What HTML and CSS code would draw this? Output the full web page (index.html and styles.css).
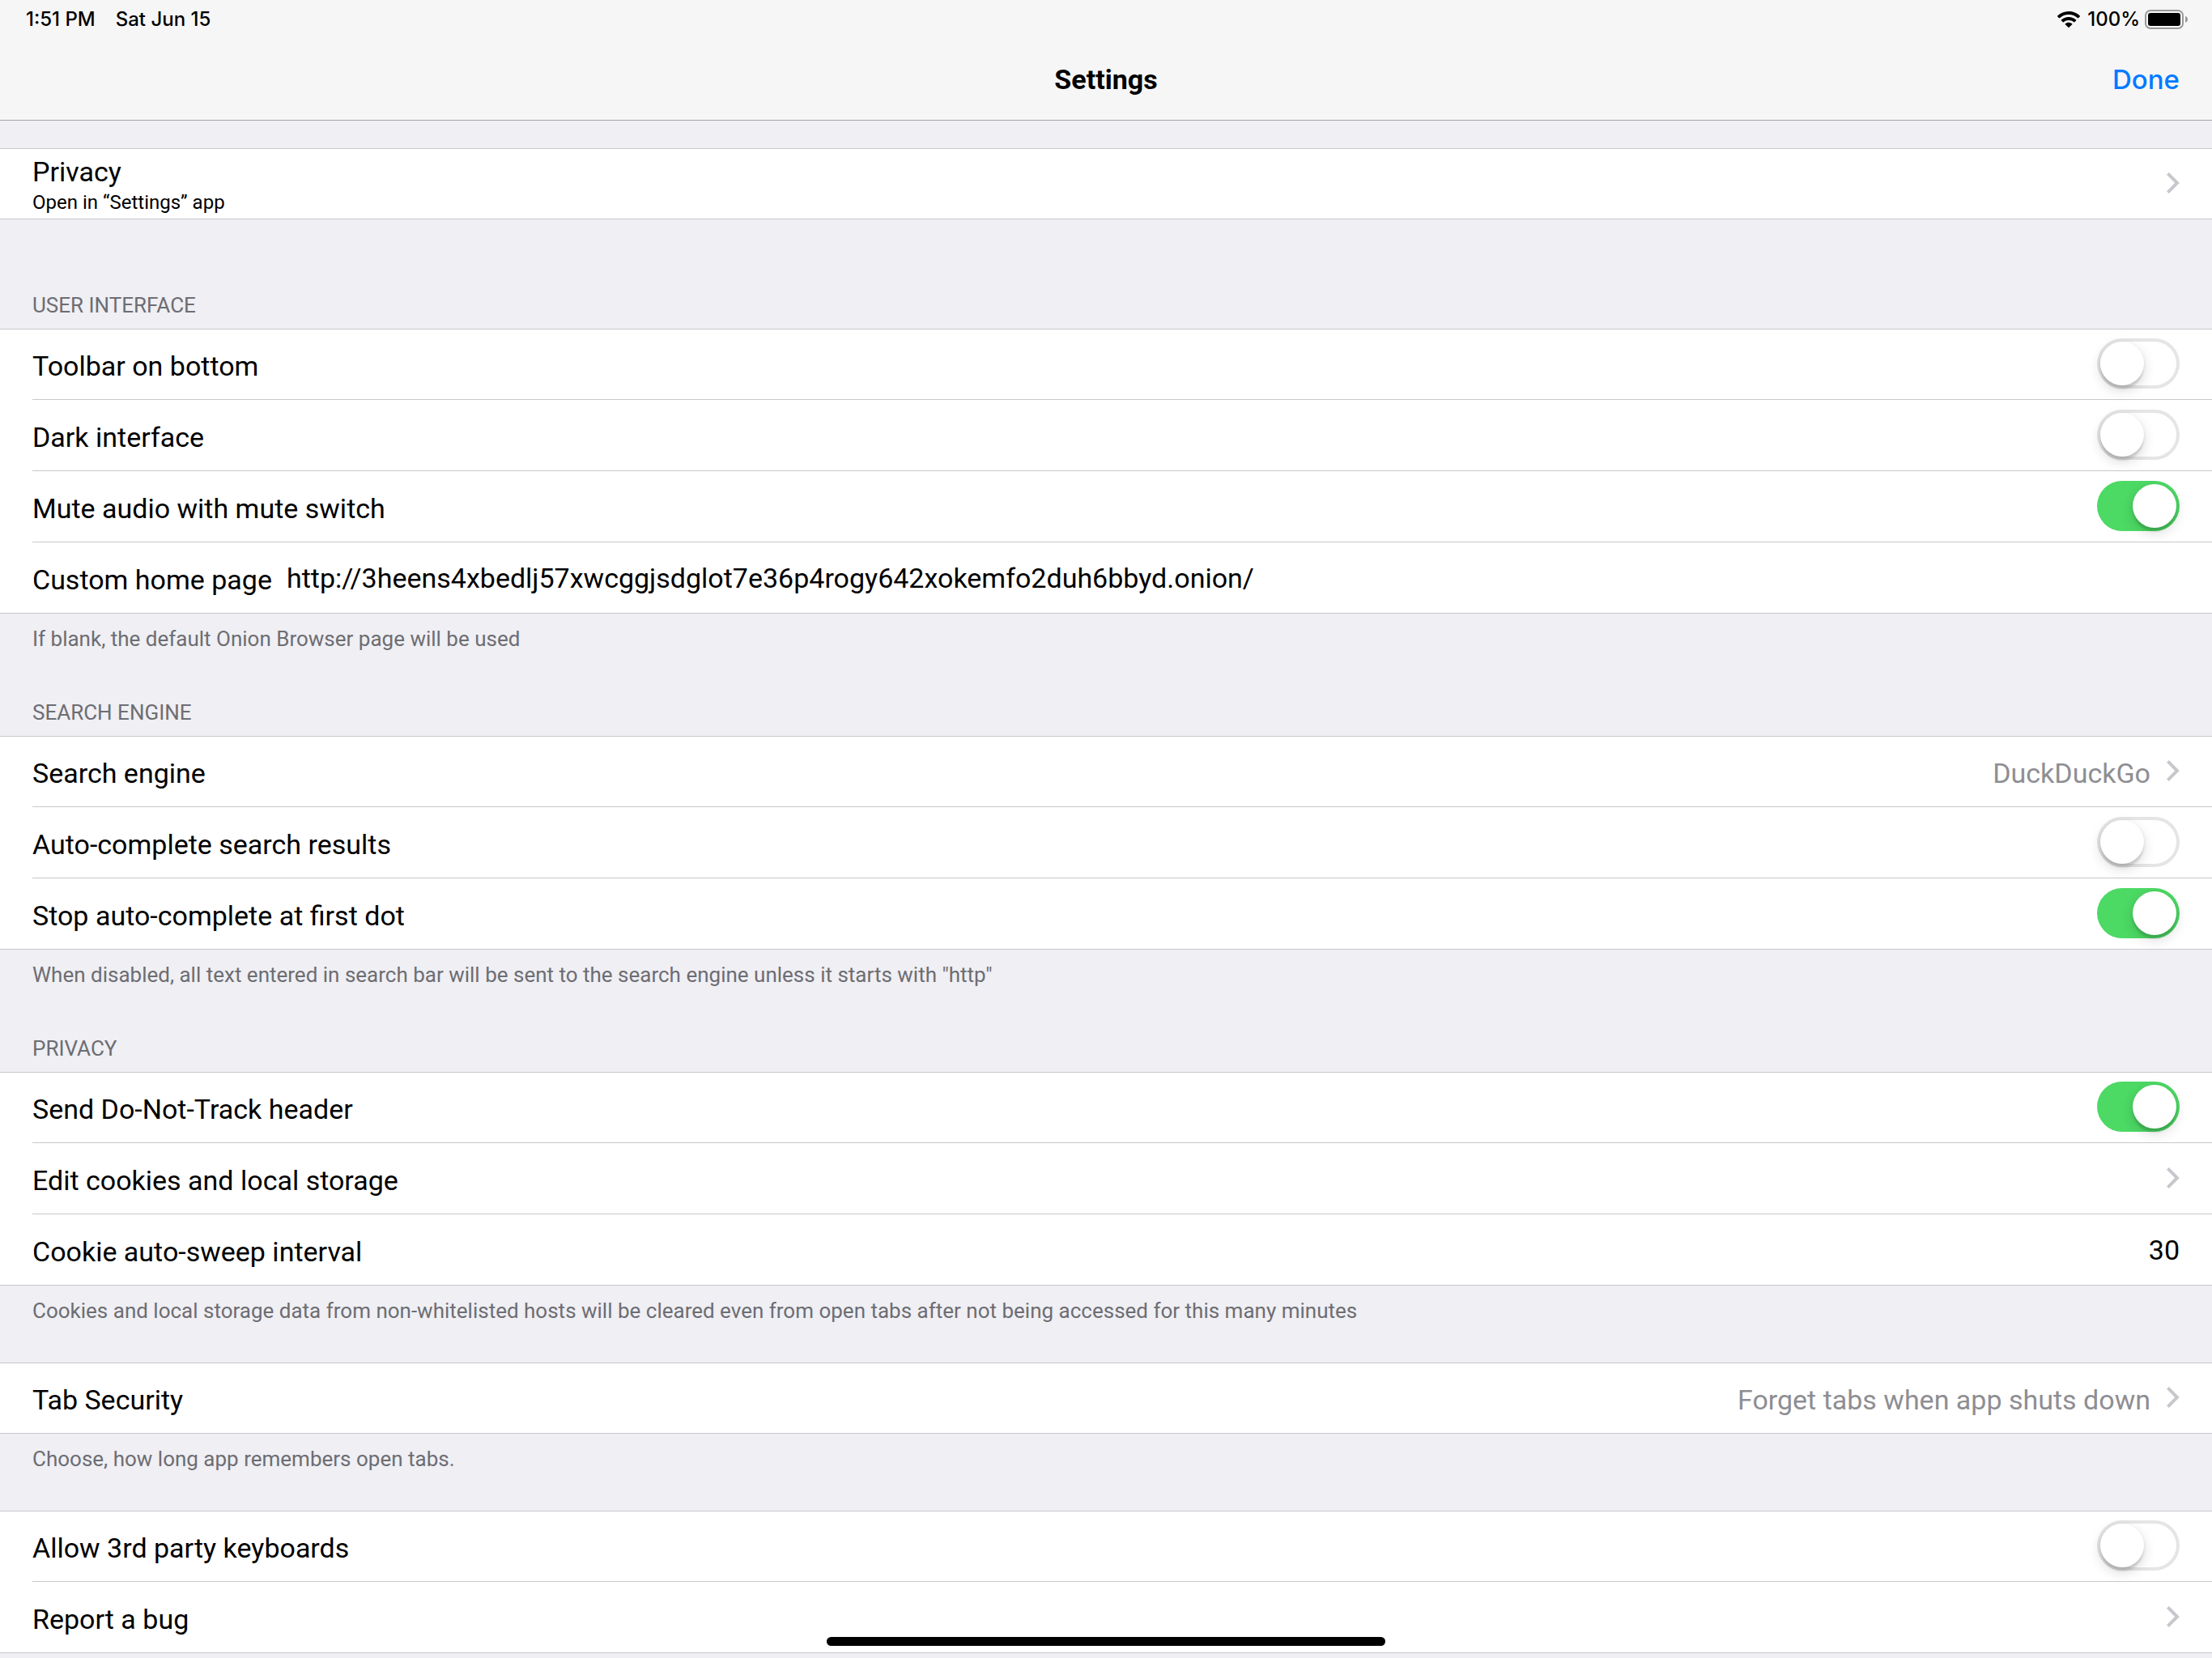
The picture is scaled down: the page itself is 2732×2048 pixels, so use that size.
FILE: index.html
```html
<!DOCTYPE html>
<html lang="en">
<head>
<meta charset="utf-8">
<meta name="viewport" content="width=device-width, initial-scale=1">
<title>Settings</title>
<link rel="stylesheet" href="styles.css">
</head>
<body>
<svg class="symbols" aria-hidden="true">
  <symbol id="chevron" viewBox="0 0 16 26"><path d="M1.4 1.4 13 13 1.4 24.6" fill="none" stroke="currentColor" stroke-width="4"/></symbol>
</svg>

<header class="top">
  <div class="status">
    <span class="status-side"><span>1:51 PM</span><span>Sat Jun 15</span></span>
    <span class="status-power">
      <svg class="wifi" viewBox="0 0 28 20" aria-hidden="true">
        <path d="M14 0C8.600 0 3.700 2.100.2 5.500a.6.6 0 0 0 0 .9l1.900 1.900a.6.6 0 0 0 .9 0A15.800 15.800 0 0 1 14 4a15.800 15.800 0 0 1 11 4.300.6.6 0 0 0 .9 0l1.900-1.900a.6.6 0 0 0 0-.9A19.900 19.900 0 0 0 14 0Z"/>
        <path d="M14 7c-3.500 0-6.700 1.300-9.100 3.500a.6.6 0 0 0 0 .9l1.900 1.900a.6.6 0 0 0 .9 0A9.300 9.300 0 0 1 14 11c2.400 0 4.600.9 6.300 2.300a.6.6 0 0 0 .9 0l1.900-1.900a.6.6 0 0 0 0-.9A13.400 13.400 0 0 0 14 7Z"/>
        <path d="M14 13.800c-1.600 0-3.100.6-4.200 1.500a.6.6 0 0 0 0 .9l3.700 3.600a.7.7 0 0 0 1 0l3.700-3.600a.6.6 0 0 0 0-.9 6.600 6.600 0 0 0-4.200-1.500Z"/>
      </svg>
      <span>100%</span>
      <svg class="battery" viewBox="0 0 54 24" aria-hidden="true">
        <rect x="1" y="1" width="46" height="22" rx="6" fill="none" stroke="#999" stroke-width="2"/>
        <rect x="4" y="4" width="40" height="16" rx="3"/>
        <path d="M50 8c2 .6 3 2.200 3 4s-1 3.400-3 4Z" fill="#999"/>
      </svg>
    </span>
  </div>
  <nav class="navbar">
    <h1 class="title">Settings</h1>
    <button class="done" type="button">Done</button>
  </nav>
</header>

<main>
  <section class="group group-first">
    <ul class="rows">
      <li class="row"><a class="cell" href="#privacy">
        <span class="stack"><span class="stack-title">Privacy</span><span class="stack-detail">Open in “Settings” app</span></span>
        <svg class="chevron" aria-hidden="true"><use href="#chevron"/></svg></a></li>
    </ul>
  </section>

  <section class="group">
    <h2 class="heading">USER INTERFACE</h2>
    <ul class="rows">
      <li class="row"><label class="cell"><span class="text">Toolbar on bottom</span><input class="switch" type="checkbox" role="switch"></label></li>
      <li class="row"><label class="cell"><span class="text">Dark interface</span><input class="switch" type="checkbox" role="switch"></label></li>
      <li class="row"><label class="cell"><span class="text">Mute audio with mute switch</span><input class="switch" type="checkbox" role="switch" checked></label></li>
      <li class="row"><label class="cell"><span class="text text-fixed">Custom home page</span><input class="field" type="text" value="http://3heens4xbedlj57xwcggjsdglot7e36p4rogy642xokemfo2duh6bbyd.onion/"></label></li>
    </ul>
    <p class="note">If blank, the default Onion Browser page will be used</p>
  </section>

  <section class="group">
    <h2 class="heading">SEARCH ENGINE</h2>
    <ul class="rows">
      <li class="row"><a class="cell" href="#search-engine"><span class="text">Search engine</span><span class="value">DuckDuckGo</span><svg class="chevron" aria-hidden="true"><use href="#chevron"/></svg></a></li>
      <li class="row"><label class="cell"><span class="text">Auto-complete search results</span><input class="switch" type="checkbox" role="switch"></label></li>
      <li class="row"><label class="cell"><span class="text">Stop auto-complete at first dot</span><input class="switch" type="checkbox" role="switch" checked></label></li>
    </ul>
    <p class="note">When disabled, all text entered in search bar will be sent to the search engine unless it starts with "http"</p>
  </section>

  <section class="group">
    <h2 class="heading">PRIVACY</h2>
    <ul class="rows">
      <li class="row"><label class="cell"><span class="text">Send Do-Not-Track header</span><input class="switch" type="checkbox" role="switch" checked></label></li>
      <li class="row"><a class="cell" href="#cookies"><span class="text">Edit cookies and local storage</span><svg class="chevron" aria-hidden="true"><use href="#chevron"/></svg></a></li>
      <li class="row"><label class="cell"><span class="text text-fixed">Cookie auto-sweep interval</span><input class="field field-end" type="text" inputmode="numeric" value="30"></label></li>
    </ul>
    <p class="note">Cookies and local storage data from non-whitelisted hosts will be cleared even from open tabs after not being accessed for this many minutes</p>
  </section>

  <section class="group">
    <ul class="rows">
      <li class="row"><a class="cell" href="#tab-security"><span class="text">Tab Security</span><span class="value">Forget tabs when app shuts down</span><svg class="chevron" aria-hidden="true"><use href="#chevron"/></svg></a></li>
    </ul>
    <p class="note">Choose, how long app remembers open tabs.</p>
  </section>

  <section class="group">
    <ul class="rows">
      <li class="row"><label class="cell"><span class="text">Allow 3rd party keyboards</span><input class="switch" type="checkbox" role="switch"></label></li>
      <li class="row"><a class="cell" href="#report"><span class="text">Report a bug</span><svg class="chevron" aria-hidden="true"><use href="#chevron"/></svg></a></li>
    </ul>
  </section>
</main>
<div class="home-indicator"></div>
</body>
</html>
```
FILE: styles.css
```css
:root {
  --line: #c8c7cc;
  --edge: 40px;
}

* {
  box-sizing: border-box;
}

body {
  margin: 0;
  min-height: 100vh;
  background: #efeff4;
  color: #000;
  font-family: Roboto, "Liberation Sans", sans-serif;
  font-size: 34px;
  line-height: 40px;
}

h1, h2, p, ul {
  margin: 0;
  padding: 0;
}

.symbols {
  display: none;
}

/* Status bar and navigation bar */
.top {
  background: #f6f6f7;
  border-bottom: 1px solid #a7a7aa;
}

.status {
  display: flex;
  justify-content: space-between;
  align-items: center;
  height: 48px;
  padding: 0 29px 0 32px;
  font-family: Inter, "Liberation Sans", sans-serif;
  font-size: 24px;
  font-weight: 500;
  line-height: 28px;
}

.status-side {
  display: flex;
  gap: 25px;
}

.status-power {
  display: flex;
  align-items: center;
  gap: 6px;
}

.wifi {
  width: 28px;
  height: 20px;
  margin-right: 3px;
}

.battery {
  width: 54px;
  height: 24px;
}

.navbar {
  display: grid;
  grid-template-columns: 1fr auto 1fr;
  align-items: center;
  height: 100px;
  padding: 0 var(--edge);
}

.title {
  grid-column: 2;
  font-size: 34px;
  font-weight: 700;
  line-height: 40px;
}

.done {
  justify-self: end;
  padding: 0;
  border: 0;
  background: none;
  color: #007aff;
  font: 500 33px/40px Inter, "Liberation Sans", sans-serif;
}

/* Grouped lists */
.group-first {
  padding: 34px 0 79px;
}

.heading {
  padding: 11px var(--edge) 13px;
  color: #6d6d72;
  font-size: 26px;
  font-weight: 400;
  line-height: 32px;
}

.note {
  padding: 15px var(--edge) 48px;
  color: #6d6d72;
  font-size: 26px;
  line-height: 32px;
}

.rows {
  list-style: none;
  background: #fff;
  border-bottom: 1px solid var(--line);
  box-shadow: inset 0 1px 0 var(--line);
}

.row {
  padding-left: var(--edge);
}

.cell {
  display: flex;
  align-items: center;
  height: 88px;
  padding: 0 var(--edge) 2px 0;
  border-bottom: 1px solid var(--line);
  color: inherit;
  text-decoration: none;
}

.row:last-child .cell {
  height: 87px;
  border-bottom: 0;
}

.text {
  flex: 1;
  padding-top: 6px;
}

.text-fixed {
  flex: none;
}

.value {
  padding-top: 6px;
  margin-right: 20px;
  color: #8e8e93;
}

.stack {
  flex: 1;
  display: flex;
  flex-direction: column;
  padding-top: 9px;
}

.stack-detail {
  font-size: 24px;
  line-height: 36px;
}

.chevron {
  width: 16px;
  height: 26px;
  color: #c7c7cc;
}

.field {
  flex: 1;
  min-width: 0;
  margin-left: 18px;
  padding: 3px 0 0;
  border: 0;
  background: none;
  color: inherit;
  font: inherit;
}

.field-end {
  text-align: right;
}

.switch {
  appearance: none;
  display: flex;
  width: 102px;
  height: 62px;
  margin: 0;
  padding: 4px;
  border-radius: 31px;
  background: #fff;
  box-shadow: inset 0 0 0 4px #e5e5e5;
}

.switch::before {
  content: "";
  width: 54px;
  height: 54px;
  border-radius: 50%;
  background: #fff;
  box-shadow: 0 6px 16px rgba(0, 0, 0, 0.15), 0 6px 2px -1px rgba(0, 0, 0, 0.08), 0 2px 4px rgba(0, 0, 0, 0.1);
}

.switch:checked {
  justify-content: flex-end;
  background: #4cd964;
  box-shadow: none;
}

.home-indicator {
  position: fixed;
  bottom: 15px;
  left: 50%;
  width: 690px;
  height: 11px;
  margin-left: -345px;
  border-radius: 6px;
  background: #000;
}
```
